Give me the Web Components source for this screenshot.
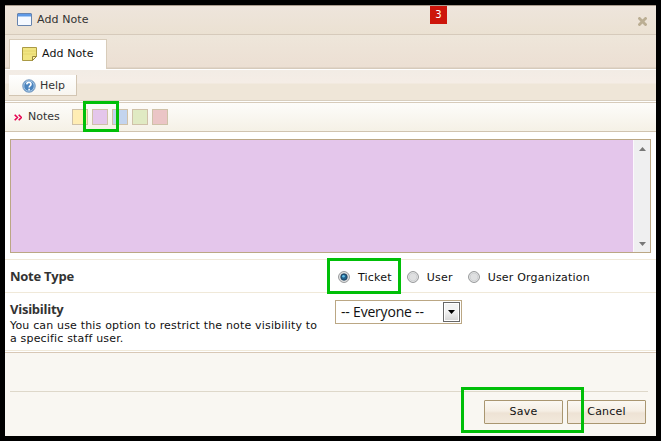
<!DOCTYPE html>
<html lang="en"><head><meta charset="utf-8"><title>Add Note</title>
<style>html,body{margin:0;background:#000;width:661px;height:441px;overflow:hidden}</style></head>
<body><note-dialog></note-dialog>
<script>
const define=(name,html)=>customElements.define(name,class extends HTMLElement{
  constructor(){super();this.attachShadow({mode:'open'}).innerHTML=html;}
});
define('window-title',`<style>
:host{display:flex;box-sizing:border-box;height:30px;padding:0 9px 0 12px;border-top:1px solid #a99b8d;border-bottom:1px solid #d6cabb;background:linear-gradient(#eee5dc,#ebe1d2);align-items:center;color:#333}
svg{display:block;flex:none;margin-top:-1px}.t{flex:1;padding-left:5px;line-height:14px;letter-spacing:.1px}svg.x{margin-top:2px}</style>
<svg width="15" height="13" viewBox="0 0 15 13"><rect x=".5" y=".5" width="14" height="12" rx=".5" fill="#f5f9ff" stroke="#6784ae"/><path d="M1 1h13v2H1z" fill="#5f99e6"/><path d="M1 3h13v1H1z" fill="#a9ccf5"/></svg>
<span class="t"><slot></slot></span>
<svg class="x" width="9" height="9" viewBox="0 0 9 9"><path d="M1.5 1.5l6 6M7.5 1.5l-6 6" stroke="#bbae93" stroke-width="2.8" stroke-linecap="square"/></svg>`);
define('tab-strip',`<style>:host{display:flex;box-sizing:border-box;height:35px;padding:4px 0 0 4px;border-bottom:1px solid #fff;background:linear-gradient(#eee6da,#ecdfd3 32px,#d6cabb 33px,#d6cabb 34px)}
.tab{box-sizing:border-box;width:98px;height:30px;display:flex;align-items:center;gap:5px;padding-left:12px;background:#fff;border:1px solid #d8ccba;border-bottom:0;color:#111;letter-spacing:.1px}svg{display:block;margin-top:-1px}span{line-height:14px;margin-top:-1px}</style>
<div class="tab"><svg width="15" height="14" viewBox="0 0 15 14"><path d="M.5.5h14v9l-4 4H.5z" fill="#f1e581" stroke="#aa9a45"/><path d="M1 4h13M1 7h13" stroke="#e5d66e"/><path d="M10.5 13.5v-4h4z" fill="#fff5a4" stroke="#96853c"/></svg><span><slot></slot></span></div>`);
define('help-bar',`<style>:host{display:flex;box-sizing:border-box;height:33px;padding:5px 0 0 4px;border-bottom:1px solid #d7cbbb;background:linear-gradient(#f2ece5,#f5ede6 13px,#efe6d8 14px,#efe6d8 30px,#d8cebf 30px,#d8cebf 31px,#fff 31px)}
.b{box-sizing:border-box;width:68px;height:21px;border:solid #d2c5b2;border-width:0 1px 1px 0;background:linear-gradient(#fff,#f8f5ef);display:flex;align-items:center;gap:5px;padding-left:13px;color:#333}span{line-height:14px;margin-top:1px;margin-left:-1px}svg{display:block;margin-top:2px}</style>
<div class="b"><svg width="14" height="14" viewBox="0 0 14 14"><circle cx="7" cy="7" r="6.3" fill="#4a83be" stroke="#8ba8c7"/><circle cx="7" cy="7" r="5.2" fill="none" stroke="#bad5ee" stroke-width=".8"/><path d="M4.8 5.4C4.9 2.6 9.3 2.9 9 5.4 8.9 6.8 7.1 6.8 7.1 8.6M7.1 9.8v1.6" fill="none" stroke="#fff" stroke-width="1.6"/></svg><span><slot></slot></span></div>`);
define('note-colors',`<style>:host{display:flex;box-sizing:border-box;height:29px;padding-left:9px;border-bottom:1px solid #d0c4b0;background:linear-gradient(#fdfcfa,#f5f1e6);align-items:center;color:#333}
svg{display:block;margin-top:1px}span{width:44px;margin-left:6px;line-height:14px}.c{display:flex;gap:4px}i{box-sizing:border-box;width:16px;height:16px;border:1px solid #cfc1a8}</style>
<svg width="8" height="7" viewBox="0 0 8 7"><path d="M.7.7l2.7 2.8L.7 6.3M4.7.7l2.7 2.8-2.7 2.8" fill="none" stroke="#e6004f" stroke-width="1.6"/></svg><span><slot></slot></span>
<div class="c"><i style="background:#ffedb4"></i><i style="background:#e4c6eb"></i><i style="background:#c3d4ee"></i><i style="background:#e0eac3"></i><i style="background:#ebc5c6"></i></div>`);
define('note-area',`<style>:host{display:flex;box-sizing:border-box;width:641px;height:114px;margin:7px 0 6px 5px;border:1px solid #bba784;background:#e4c6eb}
.s{box-sizing:border-box;width:17px;margin-left:auto;border-left:1px solid #fbf7fc;background:#efeff0;display:flex;flex-direction:column;justify-content:space-between;align-items:center;padding:7px 0 6px}svg{display:block}</style>
<div class="s"><svg width="7" height="4"><path d="M3.5 0L7 4H0z" fill="#777"/></svg><svg width="7" height="4"><path d="M0 0h7L3.5 4z" fill="#777"/></svg></div>`);
define('radio-option',`<style>:host{display:flex;align-items:center;gap:8px;color:#111;line-height:14px;letter-spacing:.2px}span{margin-top:1px}svg{display:block;flex:none}circle.d{display:none}:host([checked]) circle.d{display:block}</style>
<svg width="12" height="12" viewBox="0 0 12 12"><circle cx="6" cy="6" r="5.4" fill="#f5f5f5" stroke="#8d8f91"/><circle cx="6" cy="6" r="4" fill="#dfe0e1" stroke="#c5c8ca" stroke-width=".7"/><circle class="d" cx="6" cy="6" r="3.2" fill="#23618b" stroke="#173a55" stroke-width=".8"/><circle class="d" cx="5.5" cy="5.2" r="1.3" fill="#62c0e7"/></svg><span><slot></slot></span>`);
define('form-row',`<style>:host{display:flex;box-sizing:border-box;border-top:1px solid #f0e9d9;padding-left:5px}
.l{width:324px;flex:none}.h{font:bold 13px/17px "Open Sans",sans-serif;color:#333;letter-spacing:-.25px}.d{color:#111;line-height:13px;letter-spacing:.17px;white-space:nowrap;padding-top:1px}</style>
<div class="l"><div class="h"><slot name="heading"></slot></div><div class="d"><slot name="hint"></slot></div></div><slot></slot>`);
define('select-box',`<style>:host{display:flex;box-sizing:border-box;width:127px;height:24px;border:1px solid #bba784;background:#fff;padding:1px 1px 1px 5px;align-items:center;font:14px/20px "Open Sans",sans-serif;letter-spacing:-.2px;color:#111}
span{flex:1;white-space:nowrap}.a{box-sizing:border-box;width:17px;height:20px;border:1px solid #666;box-shadow:inset 0 0 0 1px #fff;background:linear-gradient(#f3f3f3 45%,#d4d4d4);display:grid;place-items:center}svg{display:block}</style>
<span><slot></slot></span><div class="a"><svg width="7" height="4"><path d="M0 0h7L3.5 4z" fill="#000"/></svg></div>`);
define('push-button',`<style>:host{display:block;box-sizing:border-box;width:79px;height:24px;border:1px solid #a99670;border-radius:1px;background:linear-gradient(#fbf8f3,#f5eee4 45%,#eee3d5 55%,#f2e9dc);text-align:center;line-height:21px;letter-spacing:.2px;color:#111}</style><slot></slot>`);
define('dialog-footer',`<style>:host{display:block;box-sizing:border-box;height:84px;border-top:1px solid #d8c8b6;background:#f9f7f2;padding:38px 8px 0 5px}.r{border-top:1px solid #ded8ca;display:flex;justify-content:flex-end;gap:4px;padding:8px 2px 0 0}</style><div class="r"><slot></slot></div>`);
define('focus-frame',`<style>:host{position:absolute;box-sizing:border-box;border:3px solid #00bf08;pointer-events:none}</style>`);
define('note-dialog',`<style>
:host{display:block;position:relative;width:661px;height:441px;background:#000;padding:5px;box-sizing:border-box;font:11px/13px "DejaVu Sans",sans-serif}
.w{width:651px;height:431px;background:#fff;box-sizing:border-box}
.opts{display:flex;align-items:center;gap:15px;padding-top:2px;height:30px;margin-left:4px}
.vis{height:58px;padding-top:8px}.vis select-box{margin:-1px 0 0 1px}
.type{height:33px}
.heading{display:block}.type .heading{padding-top:8px}
.badge{position:absolute;left:430px;top:6px;width:17px;height:18px;background:#cd150b;color:#fff;text-align:center;font:10px/17px "DejaVu Sans",sans-serif}
.end{height:1px;background:#f0e9d9;margin-bottom:1px}
</style><div class="w">
<window-title>Add Note</window-title><tab-strip>Add Note</tab-strip><help-bar>Help</help-bar><note-colors>Notes</note-colors><note-area></note-area>
<form-row class="type"><span class="heading" slot="heading">Note Type</span><div class="opts"><radio-option checked>Ticket</radio-option><radio-option>User</radio-option><radio-option>User Organization</radio-option></div></form-row>
<form-row class="vis"><span class="heading" slot="heading">Visibility</span><span slot="hint">You can use this option to restrict the note visibility to<br>a specific staff user.</span><select-box>-- Everyone --</select-box></form-row>
<div class="end"></div><dialog-footer><push-button>Save</push-button><push-button>Cancel</push-button></dialog-footer></div>
<div class="badge">3</div>
<focus-frame style="left:83px;top:101px;width:36px;height:31px"></focus-frame>
<focus-frame style="left:327px;top:258px;width:74px;height:36px"></focus-frame>
<focus-frame style="left:461px;top:387px;width:123px;height:46px"></focus-frame>`);
</script></body></html>
